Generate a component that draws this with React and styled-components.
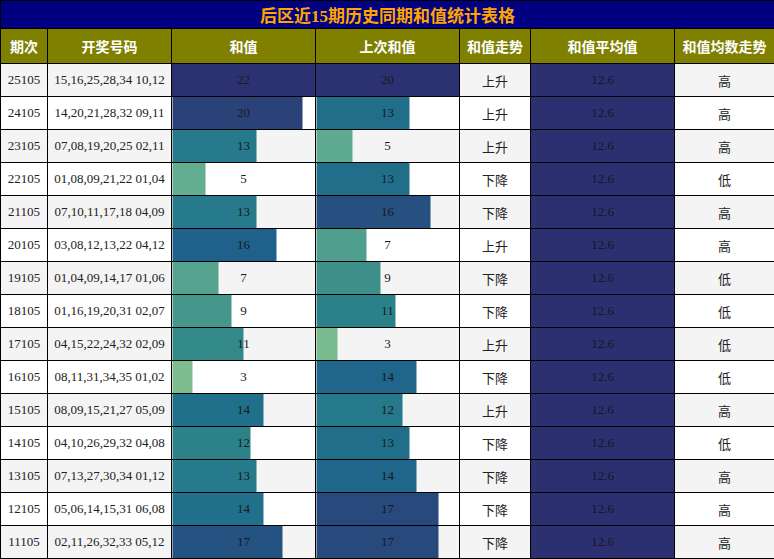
import React from "react";
import styled, { createGlobalStyle } from "styled-components";

const GlobalStyle = createGlobalStyle`
  html, body {
    margin: 0;
    padding: 0;
    background: #ffffff;
  }
  body {
    font-family: "Liberation Serif", "Noto Sans CJK SC", serif;
  }
`;

const rows = [
  { issue: "25105", nums: "15,16,25,28,34 10,12", sum: 22, prev: 20, trend: "上升", level: "高" },
  { issue: "24105", nums: "14,20,21,28,32 09,11", sum: 20, prev: 13, trend: "上升", level: "高" },
  { issue: "23105", nums: "07,08,19,20,25 02,11", sum: 13, prev: 5, trend: "上升", level: "高" },
  { issue: "22105", nums: "01,08,09,21,22 01,04", sum: 5, prev: 13, trend: "下降", level: "低" },
  { issue: "21105", nums: "07,10,11,17,18 04,09", sum: 13, prev: 16, trend: "下降", level: "高" },
  { issue: "20105", nums: "03,08,12,13,22 04,12", sum: 16, prev: 7, trend: "上升", level: "高" },
  { issue: "19105", nums: "01,04,09,14,17 01,06", sum: 7, prev: 9, trend: "下降", level: "低" },
  { issue: "18105", nums: "01,16,19,20,31 02,07", sum: 9, prev: 11, trend: "下降", level: "低" },
  { issue: "17105", nums: "04,15,22,24,32 02,09", sum: 11, prev: 3, trend: "上升", level: "低" },
  { issue: "16105", nums: "08,11,31,34,35 01,02", sum: 3, prev: 14, trend: "下降", level: "低" },
  { issue: "15105", nums: "08,09,15,21,27 05,09", sum: 14, prev: 12, trend: "上升", level: "高" },
  { issue: "14105", nums: "04,10,26,29,32 04,08", sum: 12, prev: 13, trend: "下降", level: "低" },
  { issue: "13105", nums: "07,13,27,30,34 01,12", sum: 13, prev: 14, trend: "下降", level: "高" },
  { issue: "12105", nums: "05,06,14,15,31 06,08", sum: 14, prev: 17, trend: "下降", level: "高" },
  { issue: "11105", nums: "02,11,26,32,33 05,12", sum: 17, prev: 17, trend: "下降", level: "高" },
];

const AVG = 12.6;
const maxSum = Math.max(...rows.map((r) => r.sum));
const maxPrev = Math.max(...rows.map((r) => r.prev));

// colour stops by fraction of column max (crest-like ramp)
const stops = [
  [0.136, [125, 188, 141]],
  [0.227, [99, 174, 146]],
  [0.318, [85, 162, 143]],
  [0.409, [69, 150, 139]],
  [0.5, [51, 137, 135]],
  [0.545, [44, 130, 137]],
  [0.59, [39, 122, 139]],
  [0.636, [33, 112, 139]],
  [0.727, [31, 97, 138]],
  [0.773, [36, 83, 129]],
  [0.909, [43, 66, 121]],
  [1, [44, 49, 114]],
];

const rampColor = (t) => {
  if (t <= stops[0][0]) return `rgb(${stops[0][1].join(",")})`;
  for (let i = 1; i < stops.length; i++) {
    const [t1, c1] = stops[i];
    const [t0, c0] = stops[i - 1];
    if (t <= t1) {
      const k = (t - t0) / (t1 - t0);
      const c = c0.map((v, j) => Math.round(v + (c1[j] - v) * k));
      return `rgb(${c.join(",")})`;
    }
  }
  return `rgb(${stops[stops.length - 1][1].join(",")})`;
};

const Table = styled.table`
  width: 774px;
  border-collapse: collapse;
  table-layout: fixed;
`;

const TitleCell = styled.th`
  height: 27px;
  padding: 0;
  border: 1px solid #000;
  background: #000080;
  color: #ffa500;
  font-size: 17px;
  font-weight: bold;
  text-align: center;
  vertical-align: middle;
`;

const HeadCell = styled.th`
  height: 34px;
  padding: 0;
  border: 1px solid #000;
  background: #808000;
  color: #ffffff;
  font-family: "Noto Sans CJK SC", sans-serif;
  font-size: 14px;
  font-weight: bold;
  text-align: center;
  vertical-align: middle;
  white-space: nowrap;
`;

const Row = styled.tr`
  background: ${({ $odd }) => ($odd ? "#f4f4f4" : "#ffffff")};
`;

const Cell = styled.td`
  height: 32px;
  padding: 0;
  border: 1px solid #000;
  text-align: center;
  vertical-align: middle;
  color: #222;
  font-family: ${({ $cjk }) =>
    $cjk ? `"Noto Sans CJK SC", sans-serif` : `"Liberation Serif", serif`};
  font-size: 13px;
  white-space: nowrap;
`;

const BarCell = styled(Cell)`
  background: ${({ $color, $pct }) =>
    `linear-gradient(90deg, ${$color} ${$pct}%, transparent ${$pct}%)`};
  color: #1a1a1a;
`;

const AvgCell = styled(Cell)`
  background: #2c3070;
  color: #15152a;
`;

function Bar({ value, max }) {
  const t = value / max;
  return (
    <BarCell $color={rampColor(t)} $pct={(t * 100).toFixed(2)}>
      {value}
    </BarCell>
  );
}

export default function App() {
  return (
    <>
      <GlobalStyle />
      <Table>
        <colgroup>
          <col style={{ width: 47 }} />
          <col style={{ width: 124 }} />
          <col style={{ width: 144 }} />
          <col style={{ width: 144 }} />
          <col style={{ width: 71 }} />
          <col style={{ width: 144 }} />
          <col style={{ width: 100 }} />
        </colgroup>
        <thead>
          <tr>
            <TitleCell colSpan={7}>后区近15期历史同期和值统计表格</TitleCell>
          </tr>
          <tr>
            <HeadCell>期次</HeadCell>
            <HeadCell>开奖号码</HeadCell>
            <HeadCell>和值</HeadCell>
            <HeadCell>上次和值</HeadCell>
            <HeadCell>和值走势</HeadCell>
            <HeadCell>和值平均值</HeadCell>
            <HeadCell>和值均数走势</HeadCell>
          </tr>
        </thead>
        <tbody>
          {rows.map((r, i) => (
            <Row key={r.issue} $odd={i % 2 === 0}>
              <Cell>{r.issue}</Cell>
              <Cell>{r.nums}</Cell>
              <Bar value={r.sum} max={maxSum} />
              <Bar value={r.prev} max={maxPrev} />
              <Cell $cjk>{r.trend}</Cell>
              <AvgCell>{AVG}</AvgCell>
              <Cell $cjk>{r.level}</Cell>
            </Row>
          ))}
        </tbody>
      </Table>
    </>
  );
}
